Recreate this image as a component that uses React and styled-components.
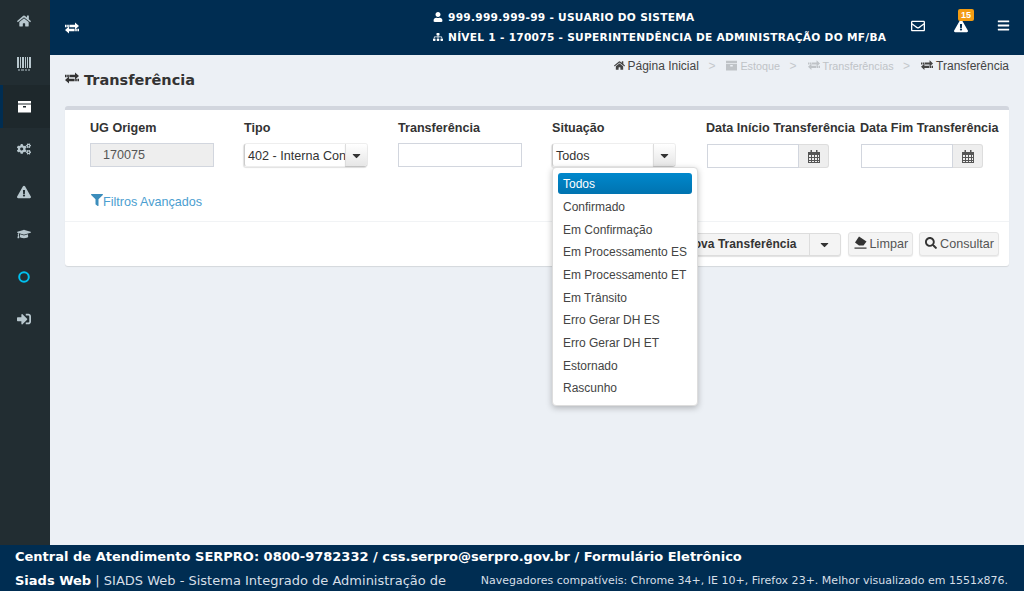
import React from 'react';
import styled, { createGlobalStyle } from 'styled-components';
import {
  FaHome, FaCogs, FaExclamationTriangle, FaGraduationCap,
  FaSignInAlt, FaUser, FaSitemap, FaRegEnvelope, FaBars, FaFilter,
  FaSearch, FaCaretDown,
} from 'react-icons/fa';

const GlobalStyle = createGlobalStyle`
  html, body { margin: 0; padding: 0; height: 100%; overflow: hidden; }
  body { font-family: "Liberation Sans", Arial, sans-serif; font-size: 12.6px; color: #333; background: #ecf0f5; }
  * { box-sizing: border-box; }
`;

const Page = styled.div`
  display: flex;
  flex-direction: column;
  height: 591px;
`;

const Body = styled.div`
  flex: 1;
  display: flex;
  min-height: 0;
`;

const Sidebar = styled.nav`
  width: 50px;
  flex: none;
  background: #222d32;
`;

const SideItem = styled.a`
  display: flex;
  align-items: center;
  justify-content: center;
  height: 42.6px;
  font-size: 14px;
  color: ${(p) => p.$color || '#b8c7ce'};
  background: ${(p) => (p.$active ? '#1e282c' : 'transparent')};
  border-left: 3px solid ${(p) => (p.$active ? '#002d52' : 'transparent')};
  padding-right: 5px;
`;

const Content = styled.div`
  flex: 1;
  min-width: 0;
  display: flex;
  flex-direction: column;
`;

const TopBar = styled.header`
  height: 55px;
  flex: none;
  background: #002d52;
  color: #fff;
  display: flex;
  align-items: center;
  padding: 0 14px 0 15px;
  font-family: "DejaVu Sans", sans-serif;
`;

const TopToggle = styled.span`
  font-size: 14px;
  display: flex;
  margin-right: 354px;
`;

const UserInfo = styled.div`
  font-size: 10.6px;
  font-weight: bold;
  line-height: 20px;
  flex: 1;
  white-space: nowrap;
  letter-spacing: 0.28px;
  margin-bottom: 2px;
`;

const UserLine = styled.div`
  display: flex;
  align-items: center;
  gap: 5px;
  svg { font-size: 10px; }
`;

const TopIcons = styled.div`
  display: flex;
  align-items: center;
  gap: 29px;
  font-size: 14px;
  margin-bottom: 4px;
`;

const TopIcon = styled.span`
  position: relative;
  display: flex;
  font-size: ${(p) => p.$size || '14px'};
`;

const Badge = styled.span`
  position: absolute;
  top: -10px;
  left: 4px;
  width: 16px;
  height: 12px;
  border-radius: 2px;
  background: #f39c12;
  color: #fff;
  font: bold 9px/12px "Liberation Sans", sans-serif;
  text-align: center;
`;

const PageHead = styled.div`
  height: 51px;
  flex: none;
  display: flex;
  justify-content: space-between;
  padding: 0 15px;
`;

const Title = styled.h1`
  margin: 16px 0 0;
  display: flex;
  align-items: center;
  gap: 5px;
  height: 18px;
  font: bold 14.5px "DejaVu Sans", sans-serif;
  color: #333;
  svg { margin-top: -5px; }
`;

const Crumbs = styled.div`
  display: flex;
  align-items: center;
  height: 21px;
  font-size: 12px;
`;

const Crumb = styled.span`
  display: flex;
  align-items: center;
  gap: 3px;
  font-size: ${(p) => (p.$muted ? '10.8px' : '12px')};
  color: ${(p) => (p.$muted ? '#bfc3c7' : '#444')};
  svg { font-size: 11px; }
`;

const Sep = styled.span`
  color: #c4c8cc;
  margin: 0 11px 0 9.5px;
`;

const Card = styled.section`
  position: relative;
  margin: 0 15px;
  height: 160px;
  background: #fff;
  border-top: 4px solid #d2d6de;
  border-radius: 3px;
  box-shadow: 0 1px 1px rgba(0, 0, 0, 0.1);
`;

const Filters = styled.div`
  height: 112px;
  padding: 11px 0 0 25px;
  border-bottom: 1px solid #f1f3f5;
`;

const Fields = styled.div`
  display: grid;
  grid-template-columns: repeat(6, 154px);
`;

const Field = styled.div`
  display: flex;
  flex-direction: column;
`;

const Label = styled.label`
  font-weight: bold;
  font-size: 12.6px;
  line-height: 15px;
  margin-bottom: 7px;
  color: #333;
  white-space: nowrap;
`;

const Input = styled.div`
  width: 124px;
  height: 24px;
  border: 1px solid #d2d6de;
  background: ${(p) => (p.$disabled ? '#eee' : '#fff')};
  color: #555;
  line-height: 22px;
  padding-left: 12px;
  margin-bottom: 1px;
`;

const Select = styled.div`
  width: 124px;
  height: 24px;
  display: flex;
  border-radius: 3px;
  box-shadow: -1px 1px 1px rgba(0, 0, 0, 0.12);
  border: 1px solid #eee;
  border-left-color: #ccc;
`;

const SelectText = styled.span`
  flex: 1;
  min-width: 0;
  overflow: hidden;
  white-space: nowrap;
  padding-left: 3px;
  line-height: 24px;
  color: #333;
`;

const Caret = styled.span`
  width: 22px;
  flex: none;
  display: flex;
  align-items: center;
  justify-content: center;
  font-size: 13px;
  color: #333;
  background: linear-gradient(#fff, #e6e6e6);
  border-left: 1px solid #ddd;
  border-radius: 0 3px 3px 0;
  box-shadow: 0 1px 1px rgba(0, 0, 0, 0.2);
`;

const DateGroup = styled.div`
  display: flex;
  width: 122px;
  height: 24px;
  margin: 1px 0 0 1px;
`;

const DateInput = styled.div`
  flex: 1;
  border: 1px solid #d2d6de;
  background: #fff;
`;

const DateAddon = styled.span`
  width: 30px;
  display: flex;
  align-items: center;
  justify-content: center;
  color: #555;
  background: #eee;
  border: 1px solid #ddd;
  border-left: none;
  border-radius: 0 3px 3px 0;
`;

const AdvancedLink = styled.a`
  display: inline-flex;
  align-items: center;
  margin: 27px 0 0 1px;
  color: #4b9ed0;
  svg { font-size: 12px; margin-top: -4px; color: #3c8dbc; }
`;

const Actions = styled.div`
  display: flex;
  justify-content: flex-end;
  align-items: center;
  gap: 6px;
  height: 44px;
  padding: 0 10px 0 0;
`;

const SplitButton = styled.div`
  display: flex;
  height: 23px;
  margin-right: 1px;
  border: 1px solid #ddd;
  border-radius: 3px;
  background: #f4f4f4;
  box-shadow: 0 1px 1px rgba(0, 0, 0, 0.12);
  font-weight: bold;
  font-size: 12px;
  line-height: 21px;
  color: #333;
`;

const SplitMain = styled.span`
  padding: 0 12px 0 8px;
  letter-spacing: 0.05px;
`;

const SplitCaret = styled.span`
  width: 31px;
  display: flex;
  align-items: center;
  justify-content: center;
  font-size: 13px;
  border-left: 1px solid #ddd;
`;

const Button = styled.button`
  display: flex;
  align-items: center;
  gap: 3px;
  height: 24px;
  padding: 0 4px 0 5px;
  font: 12.6px "Liberation Sans", sans-serif;
  color: #555;
  background: #f4f4f4;
  border: 1px solid #e4e4e4;
  border-radius: 3px;
  box-shadow: 0 1px 1px rgba(0, 0, 0, 0.08);
  svg { font-size: 12px; margin-top: -3px; color: #333; }
`;

const Menu = styled.ul`
  position: absolute;
  top: 57px;
  left: 487px;
  width: 146px;
  height: 239px;
  margin: 0;
  padding: 5.4px 5px;
  list-style: none;
  background: #fff;
  border: 1px solid #ddd;
  border-radius: 4px;
  box-shadow: 0 2px 6px rgba(0, 0, 0, 0.25);
  z-index: 5;
`;

const MenuItem = styled.li`
  height: 21px;
  margin-bottom: 1.67px;
  padding-left: 5px;
  line-height: 22px;
  font-size: 12px;
  white-space: nowrap;
  border-radius: 3px;
  color: ${(p) => (p.$active ? '#fff' : '#444')};
  background: ${(p) => (p.$active ? 'linear-gradient(#0088cc, #0073b0)' : 'transparent')};
`;

const Footer = styled.footer`
  height: 46px;
  flex: none;
  background: #002d52;
  color: #fff;
  padding: 4px 16px 0 15px;
  font-family: "DejaVu Sans", sans-serif;
`;

const FooterLine = styled.div`
  font-size: 13px;
  font-weight: bold;
  line-height: 16px;
  white-space: nowrap;
`;

const FooterRow = styled.div`
  display: flex;
  justify-content: space-between;
  align-items: center;
  margin-top: 8px;
  line-height: 16px;
  white-space: nowrap;
`;

const FooterApp = styled.span`
  font-size: 13px;
  color: #d6dfe7;
  strong { color: #fff; }
`;

const FooterNote = styled.span`
  font-size: 11.03px;
  color: #d6dfe7;
`;

// drawn by hand: the icon set of the original has no match in the packages
const ExchangeIcon = ({ size = 14 }) => (
  <svg width={size} height={(size * 12) / 14} viewBox="0 0 14 12" fill="currentColor">
    <path d="M0 2.8h1.6v2.4H0zM2.2 2.8h1.6v2.4H2.2zM4.4 2.8H10V0.4L14 4l-4 3.6V5.2H4.4z" />
    <path d="M14 6.8h-1.6v2.4H14zM11.8 6.8h-1.6v2.4h1.6zM9.6 6.8H4V4.4L0 8l4 3.6V9.2h5.6z" />
  </svg>
);

const ArchiveIcon = ({ size = 13 }) => (
  <svg width={size} height={size} viewBox="0 0 13 13" fill="currentColor">
    <path d="M0 1h13v2.5H0zM0 4.5h13V12.5H0zM5 6v1.6h3V6z" fillRule="evenodd" />
  </svg>
);

const BarcodeIcon = () => (
  <svg width="14" height="14" viewBox="0 0 14 14" fill="currentColor">
    <path d="M0 0h2v11H0zM3 0h1v11H3zM5 0h2v11H5zM8 0h1v11H8zM10 0h1v11h-1zM12 0h2v11h-2z" />
    <path d="M1 12.6h2v1H1zM4 12.6h3v1H4zM8 12.6h2v1H8zM11 12.6h2v1h-2z" />
  </svg>
);

const RingIcon = () => (
  <svg width="12" height="12" viewBox="0 0 12 12" fill="none" stroke="currentColor" strokeWidth="2">
    <circle cx="6" cy="6" r="4.8" />
  </svg>
);

const CalendarIcon = () => (
  <svg width="12" height="13" viewBox="0 0 12 13">
    <path d="M0 2h12v11H0z" fill="#555" />
    <path d="M1 5h2v2H1zM4 5h2v2H4zM7 5h2v2H7zM10 5h1v2h-1zM1 8h2v2H1zM4 8h2v2H4zM7 8h2v2H7zM10 8h1v2h-1zM1 11h2v1H1zM4 11h2v1H4zM7 11h2v1H7zM10 11h1v1h-1z" fill="#eee" />
    <path d="M2.5 0h1.5v3H2.5zM8 0h1.5v3H8z" fill="#555" />
  </svg>
);

const EraserIcon = () => (
  <svg width="13" height="13" viewBox="0 0 13 13" fill="currentColor">
    <path d="M5 0.5 12.5 5.5 9.5 9.5H5L1 6.5z" />
    <path d="M0.5 11.5h12v1.2H0.5z" />
  </svg>
);

const sideItems = [
  { icon: <FaHome /> },
  { icon: <BarcodeIcon /> },
  { icon: <ArchiveIcon />, active: true, color: '#fff' },
  { icon: <FaCogs /> },
  { icon: <FaExclamationTriangle /> },
  { icon: <FaGraduationCap /> },
  { icon: <RingIcon />, color: '#00c0ef' },
  { icon: <FaSignInAlt /> },
];

const situacoes = [
  'Todos', 'Confirmado', 'Em Confirmação', 'Em Processamento ES', 'Em Processamento ET',
  'Em Trânsito', 'Erro Gerar DH ES', 'Erro Gerar DH ET', 'Estornado', 'Rascunho',
];

export default function App() {
  return (
    <Page>
      <GlobalStyle />
      <Body>
        <Sidebar>
          {sideItems.map((item, i) => (
            <SideItem key={i} $active={item.active} $color={item.color}>{item.icon}</SideItem>
          ))}
        </Sidebar>
        <Content>
          <TopBar>
            <TopToggle><ExchangeIcon /></TopToggle>
            <UserInfo>
              <UserLine><FaUser /> 999.999.999-99 - USUARIO DO SISTEMA</UserLine>
              <UserLine><FaSitemap /> NÍVEL 1 - 170075 - SUPERINTENDÊNCIA DE ADMINISTRAÇÃO DO MF/BA</UserLine>
            </UserInfo>
            <TopIcons>
              <TopIcon><FaRegEnvelope /></TopIcon>
              <TopIcon><FaExclamationTriangle /><Badge>15</Badge></TopIcon>
              <TopIcon $size="13px"><FaBars /></TopIcon>
            </TopIcons>
          </TopBar>
          <PageHead>
            <Title><ExchangeIcon /> Transferência</Title>
            <Crumbs>
              <Crumb><FaHome /> Página Inicial</Crumb>
              <Sep>&gt;</Sep>
              <Crumb $muted><ArchiveIcon size={11} /> Estoque</Crumb>
              <Sep>&gt;</Sep>
              <Crumb $muted><ExchangeIcon size={12} /> Transferências</Crumb>
              <Sep>&gt;</Sep>
              <Crumb><ExchangeIcon size={12} /> Transferência</Crumb>
            </Crumbs>
          </PageHead>
          <Card>
            <Filters>
              <Fields>
                <Field>
                  <Label>UG Origem</Label>
                  <Input $disabled>170075</Input>
                </Field>
                <Field>
                  <Label>Tipo</Label>
                  <Select>
                    <SelectText>402 - Interna Confirmada</SelectText>
                    <Caret><FaCaretDown /></Caret>
                  </Select>
                </Field>
                <Field>
                  <Label>Transferência</Label>
                  <Input />
                </Field>
                <Field>
                  <Label>Situação</Label>
                  <Select>
                    <SelectText>Todos</SelectText>
                    <Caret><FaCaretDown /></Caret>
                  </Select>
                </Field>
                <Field>
                  <Label>Data Início Transferência</Label>
                  <DateGroup>
                    <DateInput />
                    <DateAddon><CalendarIcon /></DateAddon>
                  </DateGroup>
                </Field>
                <Field>
                  <Label>Data Fim Transferência</Label>
                  <DateGroup>
                    <DateInput />
                    <DateAddon><CalendarIcon /></DateAddon>
                  </DateGroup>
                </Field>
              </Fields>
              <AdvancedLink><FaFilter />Filtros Avançados</AdvancedLink>
            </Filters>
            <Actions>
              <SplitButton>
                <SplitMain>Nova Transferência</SplitMain>
                <SplitCaret><FaCaretDown /></SplitCaret>
              </SplitButton>
              <Button><EraserIcon /> Limpar</Button>
              <Button><FaSearch /> Consultar</Button>
            </Actions>
            <Menu>
              {situacoes.map((s, i) => (
                <MenuItem key={s} $active={i === 0}>{s}</MenuItem>
              ))}
            </Menu>
          </Card>
        </Content>
      </Body>
      <Footer>
        <FooterLine>Central de Atendimento SERPRO: 0800-9782332 / css.serpro@serpro.gov.br / Formulário Eletrônico</FooterLine>
        <FooterRow>
          <FooterApp><strong>Siads Web</strong> | SIADS Web - Sistema Integrado de Administração de</FooterApp>
          <FooterNote>Navegadores compatíveis: Chrome 34+, IE 10+, Firefox 23+. Melhor visualizado em 1551x876.</FooterNote>
        </FooterRow>
      </Footer>
    </Page>
  );
}
